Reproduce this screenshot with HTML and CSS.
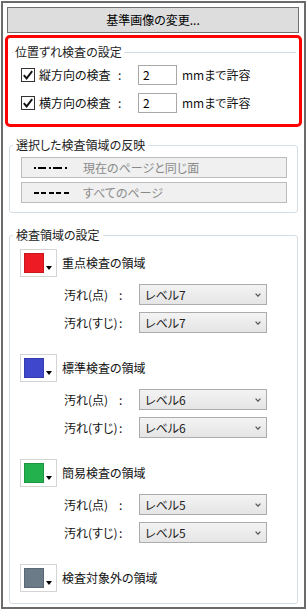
FILE: index.html
```html
<!DOCTYPE html>
<html lang="ja">
<head>
<meta charset="utf-8">
<title>検査設定</title>
<link rel="stylesheet" href="styles.css">
</head>
<body>
<div class="frame">
  <div class="btn-main">基準画像の変更...</div>

  <div class="redbox">
    <fieldset class="grp grp-plain">
      <legend>位置ずれ検査の設定</legend>
      <div class="chk-rows">
        <div class="chk-row">
          <span class="chk"><svg width="12" height="12" viewBox="0 0 12 12"><path d="M1.8 6.2 L4.6 9.4 L10.2 2.2" fill="none" stroke="#111" stroke-width="1.9"/></svg></span>
          <span class="chk-label">縦方向の検査</span>
          <span class="colon">:</span>
          <span class="num">2</span>
          <span class="unit">mmまで許容</span>
        </div>
        <div class="chk-row">
          <span class="chk"><svg width="12" height="12" viewBox="0 0 12 12"><path d="M1.8 6.2 L4.6 9.4 L10.2 2.2" fill="none" stroke="#111" stroke-width="1.9"/></svg></span>
          <span class="chk-label">横方向の検査</span>
          <span class="colon">:</span>
          <span class="num">2</span>
          <span class="unit">mmまで許容</span>
        </div>
      </div>
    </fieldset>
  </div>

  <fieldset class="grp grp-apply">
    <legend>選択した検査領域の反映</legend>
    <div class="apply-body">
      <div class="apply-btn">
        <svg class="line-icon" width="36" height="4" viewBox="0 0 36 4">
          <rect x="0" y="1" width="2" height="2" fill="#000"/>
          <rect x="4" y="1" width="8" height="2" fill="#000"/>
          <rect x="15" y="1" width="2" height="2" fill="#000"/>
          <rect x="19" y="1" width="9" height="2" fill="#000"/>
          <rect x="31" y="1" width="2" height="2" fill="#000"/>
        </svg>
        <span>現在のページと同じ面</span>
      </div>
      <div class="apply-btn">
        <svg class="line-icon" width="36" height="4" viewBox="0 0 36 4">
          <rect x="0" y="1" width="5" height="2" fill="#000"/>
          <rect x="7" y="1" width="5" height="2" fill="#000"/>
          <rect x="15" y="1" width="5" height="2" fill="#000"/>
          <rect x="22" y="1" width="5" height="2" fill="#000"/>
          <rect x="30" y="1" width="5" height="2" fill="#000"/>
        </svg>
        <span>すべてのページ</span>
      </div>
    </div>
  </fieldset>

  <fieldset class="grp grp-area">
    <legend>検査領域の設定</legend>
    <div class="area-body">
      <div class="area">
        <div class="area-head">
          <span class="swatch"><span class="sq sq-red"></span><span class="arrow"></span></span>
          <span>重点検査の領域</span>
        </div>
        <div class="lv-row"><span class="lv-label">汚れ(点)</span><span class="colon">:</span><span class="select"><span>レベル7</span><svg width="6" height="4" viewBox="0 0 6 4"><path d="M0.6 0.6 L3 3.2 L5.4 0.6" fill="none" stroke="#555" stroke-width="1.2"/></svg></span></div>
        <div class="lv-row"><span class="lv-label">汚れ(すじ)</span><span class="colon">:</span><span class="select"><span>レベル7</span><svg width="6" height="4" viewBox="0 0 6 4"><path d="M0.6 0.6 L3 3.2 L5.4 0.6" fill="none" stroke="#555" stroke-width="1.2"/></svg></span></div>
      </div>
      <div class="area">
        <div class="area-head">
          <span class="swatch"><span class="sq sq-blue"></span><span class="arrow"></span></span>
          <span>標準検査の領域</span>
        </div>
        <div class="lv-row"><span class="lv-label">汚れ(点)</span><span class="colon">:</span><span class="select"><span>レベル6</span><svg width="6" height="4" viewBox="0 0 6 4"><path d="M0.6 0.6 L3 3.2 L5.4 0.6" fill="none" stroke="#555" stroke-width="1.2"/></svg></span></div>
        <div class="lv-row"><span class="lv-label">汚れ(すじ)</span><span class="colon">:</span><span class="select"><span>レベル6</span><svg width="6" height="4" viewBox="0 0 6 4"><path d="M0.6 0.6 L3 3.2 L5.4 0.6" fill="none" stroke="#555" stroke-width="1.2"/></svg></span></div>
      </div>
      <div class="area">
        <div class="area-head">
          <span class="swatch"><span class="sq sq-green"></span><span class="arrow"></span></span>
          <span>簡易検査の領域</span>
        </div>
        <div class="lv-row"><span class="lv-label">汚れ(点)</span><span class="colon">:</span><span class="select"><span>レベル5</span><svg width="6" height="4" viewBox="0 0 6 4"><path d="M0.6 0.6 L3 3.2 L5.4 0.6" fill="none" stroke="#555" stroke-width="1.2"/></svg></span></div>
        <div class="lv-row"><span class="lv-label">汚れ(すじ)</span><span class="colon">:</span><span class="select"><span>レベル5</span><svg width="6" height="4" viewBox="0 0 6 4"><path d="M0.6 0.6 L3 3.2 L5.4 0.6" fill="none" stroke="#555" stroke-width="1.2"/></svg></span></div>
      </div>
      <div class="area area-last">
        <div class="area-head">
          <span class="swatch"><span class="sq sq-gray"></span><span class="arrow"></span></span>
          <span>検査対象外の領域</span>
        </div>
      </div>
    </div>
  </fieldset>
</div>
</body>
</html>
```
FILE: styles.css
```css
* { box-sizing: border-box; }

body {
  margin: 0;
  background: #ffffff;
  font-family: "Noto Sans CJK JP", "Noto Sans", sans-serif;
  font-size: 12px;
  line-height: 16px;
  color: #1a1a1a;
  font-feature-settings: "palt";
}

.frame {
  margin: 1px 0 0 1px;
  width: 305px;
  height: 608px;
  border: 2px solid #6b6b6b;
  display: flex;
  flex-direction: column;
  background: #ffffff;
}

.btn-main {
  margin: 4px 5px 0 4px;
  height: 26px;
  border: 1px solid #707070;
  background: #dddddd;
  color: #000;
  display: flex;
  align-items: center;
  justify-content: center;
}

.redbox {
  margin: 2px 2px 0 2px;
  height: 92px;
  border: 3px solid #ff0000;
  border-radius: 5px;
}

.grp {
  margin: 0;
  padding: 0;
  min-width: 0;
  border: 1px solid #d5dde5;
  border-radius: 3px;
}

.grp legend {
  padding: 0 3px;
  margin-left: 3px;
  line-height: 16px;
  color: #222;
}

.grp-plain {
  border-width: 1px 0 0 0;
  border-radius: 0;
  margin: 6px 3px 0 4px;
}

.grp-plain legend {
  margin-left: 1px;
  padding: 0 2px;
}

.chk-rows {
  padding: 5px 0 0 9px;
  display: flex;
  flex-direction: column;
  gap: 8px;
}

.chk-row {
  display: flex;
  align-items: center;
  height: 20px;
}

.chk {
  width: 14px;
  height: 14px;
  border: 1px solid #333;
  background: #fff;
  display: flex;
  align-items: center;
  justify-content: center;
  margin: -1px 4px 0 0;
}

.chk-label { width: 79px; color: #111; }

.colon { width: 20px; color: #111; }

.num {
  width: 39px;
  height: 20px;
  border: 1px solid #a8a8a8;
  padding-left: 4px;
  line-height: 18px;
  margin-right: 5px;
  color: #000;
}

.unit { color: #111; }

.grp-apply {
  margin: 10px 6px 0 6px;
}

.apply-body {
  padding: 4px 10px 9px 11px;
  display: flex;
  flex-direction: column;
  gap: 4px;
}

.apply-btn {
  height: 21px;
  border: 1px solid #bcbcbc;
  background: #f0f0f0;
  display: flex;
  align-items: center;
  padding-left: 12px;
  color: #8a8a8a;
}

.line-icon {
  margin-right: 13px;
  flex: none;
}

.grp-area {
  margin: 14px 6px 3px 6px;
  flex: 1;
}

.area-body {
  padding: 6px 0 0 10px;
}

.area {
  display: flex;
  flex-direction: column;
  gap: 7px;
  margin-bottom: 21px;
}

.area-last { margin-bottom: 0; }

.area-head {
  display: flex;
  align-items: center;
  gap: 5px;
  height: 28px;
  color: #111;
}

.swatch {
  width: 37px;
  height: 28px;
  border: 1px solid #d4d4d4;
  background: #fff;
  display: flex;
  align-items: flex-start;
  padding: 3px;
}

.sq {
  width: 20px;
  height: 20px;
  border: 1px solid rgba(0, 0, 0, 0.15);
}

.sq-red { background: #ed1c24; }
.sq-blue { background: #3f48cc; }
.sq-green { background: #22b14c; }
.sq-gray { background: #6c7b88; }

.arrow {
  width: 0;
  height: 0;
  border-left: 3px solid transparent;
  border-right: 3px solid transparent;
  border-top: 4px solid #000;
  margin: 13px 0 0 2px;
}

.lv-row {
  display: flex;
  align-items: center;
  height: 21px;
  padding-left: 44px;
  color: #111;
}

.lv-label { width: 55px; }

.select {
  width: 128px;
  height: 21px;
  display: flex;
  align-items: center;
  justify-content: space-between;
  border: 1px solid #acacac;
  background: linear-gradient(#f3f3f3, #e5e5e5);
  padding: 0 5px 0 5px;
  color: #222;
}
```
